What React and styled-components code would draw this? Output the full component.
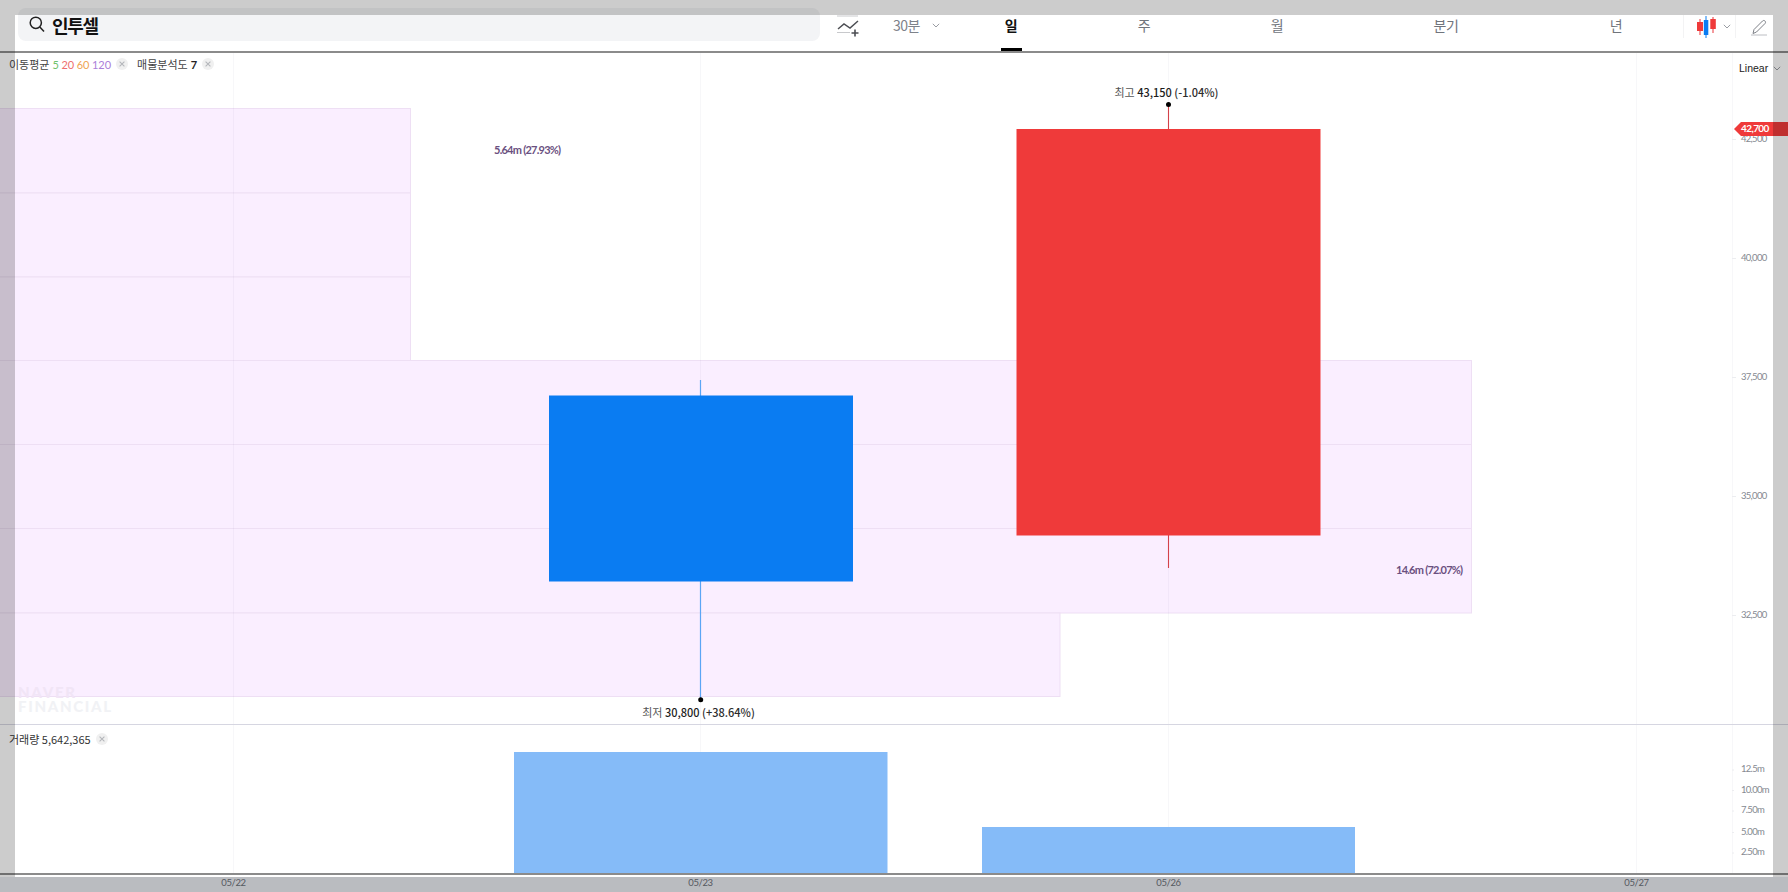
import React from "react";
import styled, { createGlobalStyle } from "styled-components";

const KR = `"Noto Sans CJK KR", "Noto Sans", sans-serif`;
const NUM = `Lato, "Noto Sans CJK KR", sans-serif`;

const Global = createGlobalStyle`
  html, body { margin: 0; padding: 0; background: #fff; overflow: hidden; }
  * { box-sizing: border-box; }
`;

const Page = styled.div`
  position: relative;
  width: 1788px;
  height: 892px;
  display: flex;
  flex-direction: column;
  background: #fff;
  font-family: ${KR};
  overflow: hidden;
`;

const Frame = styled.div`
  position: absolute;
  inset: 0;
  border: 15px solid rgba(0, 0, 0, 0.2);
  pointer-events: none;
  z-index: 5;
`;

/* header */
const Header = styled.header`
  flex: none;
  height: 53px;
  display: flex;
  align-items: flex-start;
  border-bottom: 2px solid #8b8b8b;
`;
const Search = styled.div`
  flex: none;
  width: 802px;
  height: 33px;
  margin: 8px 0 0 18px;
  padding: 0 0 0 11px;
  display: flex;
  align-items: center;
  gap: 7px;
  border-radius: 8px;
  background: #f3f4f6;
`;
const SearchText = styled.span`
  font-size: 18px;
  line-height: 36px;
  font-weight: 700;
  letter-spacing: -1.3px;
  color: #111;
`;
const IndicatorSlot = styled.div`
  flex: none;
  width: 51px;
  height: 51px;
  padding: 15px 0 0 17px;
`;
const Interval = styled.div`
  flex: none;
  width: 74px;
  height: 51px;
  padding: 0 0 1px 22px;
  display: flex;
  align-items: center;
  gap: 12px;
  font-size: 14px;
  letter-spacing: -0.5px;
  color: #7e828a;
`;
const Tab = styled.div`
  flex: none;
  width: ${(p) => p.$w}px;
  height: 51px;
  display: flex;
  justify-content: center;
`;
const TabLabel = styled.span`
  min-width: 21px;
  height: 51px;
  padding-top: 15px;
  text-align: center;
  font-size: 14px;
  line-height: 20px;
  letter-spacing: -0.5px;
  font-weight: ${(p) => (p.$active ? 700 : 400)};
  color: ${(p) => (p.$active ? "#111" : "#70747c")};
  border-bottom: 3px solid ${(p) => (p.$active ? "#000" : "transparent")};
`;
const ChartType = styled.div`
  flex: none;
  width: 53px;
  height: 23px;
  margin-top: 15px;
  padding-left: 13px;
  display: flex;
  align-items: center;
  gap: 6px;
  border-left: 1px solid #f3f3f4;
  border-right: 1px solid #f3f3f4;
`;
const PenSlot = styled.div`
  flex: none;
  padding: 17px 0 0 15px;
`;

/* panels */
const PricePanel = styled.section`
  position: relative;
  flex: none;
  height: 672px;
  border-bottom: 1px solid #d6d6e1;
`;
const VolumePanel = styled.section`
  position: relative;
  flex: none;
  height: 148px;
`;
const Plot = styled.svg`
  display: block;
  width: 1788px;
  height: ${(p) => p.$h}px;
`;
const Legend = styled.div`
  position: absolute;
  left: 9px;
  top: ${(p) => p.$top}px;
  display: flex;
  align-items: center;
  height: 16px;
  font-size: 11px;
  color: ${(p) => p.$c ?? "#444"};
`;
const LegendNum = styled.span`
  margin-left: ${(p) => p.$gap ?? 2.5}px;
  font-family: ${NUM};
  font-size: 11px;
  font-weight: ${(p) => (p.$bold ? 700 : 400)};
  color: ${(p) => p.$c};
`;
const Close = styled.span`
  width: 12px;
  height: 12px;
  margin: 0 ${(p) => p.$after ?? 0}px 0 5px;
  display: inline-flex;
  align-items: center;
  justify-content: center;
  border-radius: 50%;
  background: #f0f0f0;
`;
const Scale = styled.div`
  position: absolute;
  left: 1739px;
  top: 6px;
  display: flex;
  align-items: center;
  gap: 5px;
  font-family: "Liberation Sans", sans-serif;
  font-size: 10.5px;
  line-height: 18px;
  color: #222;
`;

/* svg text */
const Tick = styled.text`
  font-family: ${NUM};
  font-size: 9.5px;
  letter-spacing: -0.7px;
  fill: #858991;
  dominant-baseline: middle;
`;
const TagText = styled.text`
  font-family: ${NUM};
  font-size: 10px;
  font-weight: 700;
  letter-spacing: -0.6px;
  fill: #fff;
  dominant-baseline: middle;
`;
const BarLabel = styled.text`
  font-family: ${NUM};
  font-size: 11px;
  font-weight: 700;
  letter-spacing: -0.75px;
  fill: #6a5080;
  dominant-baseline: middle;
`;
const Extreme = styled.text`
  font-family: ${KR};
  font-size: 11px;
  fill: #555;
  dominant-baseline: middle;
  text-anchor: middle;
`;
const ExtremeValue = styled.tspan`
  font-weight: 500;
  fill: #1c1c1c;
`;
const ExtremeRate = styled.tspan`
  font-weight: 500;
  fill: #2c2c2c;
`;
const Mark = styled.text`
  font-family: Lato, sans-serif;
  font-size: 15px;
  font-weight: 900;
  letter-spacing: 1.7px;
  fill: ${(p) => p.$c};
`;

/* x axis */
const AxisBar = styled.div`
  flex: none;
  height: 19px;
  padding-top: 2px;
  border-top: 2px solid #8b8b8b;
  background: #e9ebf1;
  background-clip: content-box;
`;
const AxisLabel = styled.text`
  font-family: ${NUM};
  font-size: 9.5px;
  letter-spacing: -0.4px;
  fill: #6c7078;
  dominant-baseline: middle;
  text-anchor: middle;
`;

const Chevron = () => (
  <svg width="8" height="5" viewBox="0 0 8 5" fill="none" stroke="#9a9da3" strokeWidth="1">
    <path d="M.8.8 4 4 7.2.8" />
  </svg>
);
const CloseX = () => (
  <svg width="6" height="6" viewBox="0 0 6 6" stroke="#b4b6ba" strokeWidth="1.1">
    <path d="M.6.6l4.8 4.8M5.4.6.6 5.4" />
  </svg>
);

const tabs = [
  { t: "일", w: 132, active: true },
  { t: "주", w: 134 },
  { t: "월", w: 132 },
  { t: "분기", w: 206 },
  { t: "년", w: 134 },
];
const bars = [
  [108.5, 84.5, 410.5],
  [193, 84, 410.5],
  [277, 83.5, 410.5],
  [360.5, 84, 1471.5],
  [444.5, 84, 1471.5],
  [528.5, 84.5, 1471.5],
  [613, 83.5, 1060],
];
const grid = [233.5, 700.5, 1168.5, 1636.5, 1732.5];
const priceTicks = [["42,500", 139.5], ["40,000", 258.5], ["37,500", 377.5], ["35,000", 496.5], ["32,500", 615.5]];
const volumeTicks = [["12.5m", 770], ["10.00m", 790.5], ["7.50m", 811], ["5.00m", 832.5], ["2.50m", 853]];
const dates = [["05/22", 233.5], ["05/23", 700.5], ["05/26", 1168.5], ["05/27", 1636.5]];

export default function App() {
  return (
    <Page>
      <Global />
      <Header>
        <Search>
          <svg width="16" height="17" viewBox="0 0 16 17" fill="none" stroke="#222" strokeWidth="1.5">
            <circle cx="6.8" cy="6.8" r="5.6" />
            <path d="M10.8 11l4.2 4.6" />
          </svg>
          <SearchText>인투셀</SearchText>
        </Search>
        <IndicatorSlot>
          <svg width="23" height="22" viewBox="0 0 23 22" fill="none">
            <path d="M0 1h21M0 17.5h13" stroke="#c8c9cc" strokeWidth="1" />
            <path d="M1 14l6-5 6 4 8-7" stroke="#4c4e53" strokeWidth="1.5" />
            <path d="M18 14.5v7M14.5 18h7" stroke="#4c4e53" strokeWidth="1.6" />
          </svg>
        </IndicatorSlot>
        <Interval>
          <span>30분</span>
          <Chevron />
        </Interval>
        {tabs.map((x) => (
          <Tab key={x.t} $w={x.w}>
            <TabLabel $active={x.active}>{x.t}</TabLabel>
          </Tab>
        ))}
        <ChartType>
          <svg width="20" height="22" viewBox="0 0 20 22">
            <path d="M3 3v16" stroke="#e8353b" />
            <rect x="0" y="6" width="6" height="9" fill="#ef3a3a" />
            <path d="M9 0v22" stroke="#0a7cf2" />
            <rect x="6.8" y="4" width="4.5" height="15" fill="#0a7cf2" />
            <path d="M16 1v16" stroke="#e8353b" />
            <rect x="13.3" y="3" width="5.5" height="10" fill="#ef3a3a" />
          </svg>
          <Chevron />
        </ChartType>
        <PenSlot>
          <svg width="17" height="17" viewBox="0 0 17 17" fill="none">
            <path d="M2 14.5l1-4 8.5-8.5c.7-.7 1.8-.7 2.5 0s.7 1.8 0 2.5L5.5 13z" stroke="#7d8087" strokeWidth="1" />
            <path d="M0 16h16" stroke="#bcbec3" strokeWidth="1" />
          </svg>
        </PenSlot>
      </Header>

      <PricePanel>
        <Plot $h={671} viewBox="0 53 1788 671">
          {bars.map(([y, h, r]) => (
            <rect key={y} x="-2" y={y} width={r + 2} height={h} fill="#faeeff" stroke="#eedff4" strokeWidth="1" />
          ))}
          {grid.map((x) => (
            <path key={x} d={`M${x} 53V724`} stroke="#24244a" strokeOpacity=".035" />
          ))}
          <Mark x="18" y="698" $c="#f1e5f6">NAVER</Mark>
          <Mark x="18" y="711.5" $c="#f1f2f5">FINANCIAL</Mark>
          <BarLabel x="494" y="151.5">5.64m (27.93%)</BarLabel>
          <BarLabel x="1396" y="571.5">14.6m (72.07%)</BarLabel>

          <path d="M700.5 380V700" stroke="#5aa5f5" strokeWidth="1.2" />
          <rect x="549" y="395.5" width="304" height="186" fill="#0a7cf2" />
          <circle cx="700.7" cy="699.7" r="2.5" fill="#000" />
          <Extreme x="698.5" y="714">
            최저 <ExtremeValue>30,800</ExtremeValue> <ExtremeRate>(+38.64%)</ExtremeRate>
          </Extreme>

          <path d="M1168.5 104V568" stroke="#d4424a" strokeWidth="1.1" />
          <rect x="1016.5" y="129" width="304" height="406.5" fill="#ef3a3a" />
          <circle cx="1168.5" cy="104.5" r="2.5" fill="#000" />
          <Extreme x="1166.5" y="94">
            최고 <ExtremeValue>43,150</ExtremeValue> <ExtremeRate>(-1.04%)</ExtremeRate>
          </Extreme>

          {priceTicks.map(([t, y]) => (
            <g key={t}>
              <path d={`M1732 ${y}h4`} stroke="#ecedf0" />
              <Tick x="1741" y={y}>{t}</Tick>
            </g>
          ))}
          <path d="M1734 129l7-7h47v14h-47z" fill="#ef3a3a" />
          <TagText x="1741" y="129.5">42,700</TagText>
        </Plot>
        <Legend $top={3}>
          <span>이동평균</span>
          <LegendNum $c="#6fc26c" $gap={3}>5</LegendNum>
          <LegendNum $c="#ee6f6f">20</LegendNum>
          <LegendNum $c="#f0a452">60</LegendNum>
          <LegendNum $c="#ab80d9">120</LegendNum>
          <Close $after={9}><CloseX /></Close>
          <span>매물분석도</span>
          <LegendNum $c="#222" $bold={true} $gap={3}>7</LegendNum>
          <Close><CloseX /></Close>
        </Legend>
        <Scale>
          <span>Linear</span>
          <Chevron />
        </Scale>
      </PricePanel>

      <VolumePanel>
        <Plot $h={148} viewBox="0 725 1788 148">
          {grid.map((x) => (
            <path key={x} d={`M${x} 725V873`} stroke="#24244a" strokeOpacity=".035" />
          ))}
          <rect x="514" y="752" width="373.5" height="121" fill="#85bbf8" />
          <rect x="982" y="827" width="373" height="46" fill="#85bbf8" />
          {volumeTicks.map(([t, y]) => (
            <g key={t}>
              <path d={`M1732 ${y}h2`} stroke="#ecedf0" />
              <Tick x="1741" y={y}>{t}</Tick>
            </g>
          ))}
        </Plot>
        <Legend $top={5.5} $c="#333">
          <span>거래량 5,642,365</span>
          <Close><CloseX /></Close>
        </Legend>
      </VolumePanel>

      <AxisBar>
        <Plot $h={15} viewBox="0 877 1788 15">
          {dates.map(([t, x]) => (
            <AxisLabel key={t} x={x} y="883.5">{t}</AxisLabel>
          ))}
        </Plot>
      </AxisBar>
      <Frame />
    </Page>
  );
}
